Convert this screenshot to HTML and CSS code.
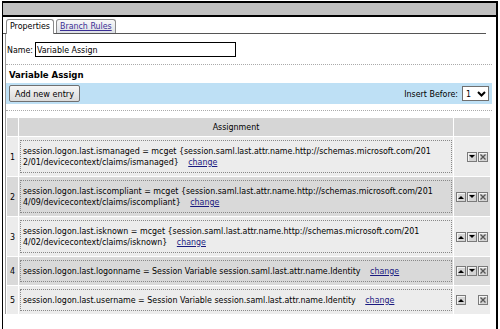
FILE: index.html
```html
<!DOCTYPE html>
<html>
<head>
    <meta charset="UTF-8">
    <title>Variable Assign</title>
    <link rel="stylesheet" href="styles.css">
</head>
<body>
    <div class="window">
        <div class="titlebar"></div>
        <div class="tabs">
            <span class="tab active">Properties</span>
            <span class="tab"><a href="#">Branch Rules</a></span>
        </div>
        <div class="panel">
            <div class="name-row">
                <label>Name:</label>
                <input type="text" value="Variable Assign">
            </div>
            <div class="sep"></div>
            <div class="section-title">Variable Assign</div>
            <div class="toolbar">
                <button type="button">Add new entry</button>
                <div class="insert">
                    <span>Insert Before:</span>
                    <span class="select">1
                        <svg width="9" height="6" viewBox="0 0 9 6"><path d="M1 1 L4.5 4.5 L8 1" fill="none" stroke="#000" stroke-width="2"/></svg>
                    </span>
                </div>
            </div>
            <div class="sep sep-table"></div>
            <table class="entries">
                <tr>
                    <th class="num"></th>
                    <th>Assignment</th>
                    <th class="actions"></th>
                </tr>
                <tr class="light">
                    <td class="num">1</td>
                    <td class="assign"><div class="box">session.logon.last.ismanaged = mcget {session.saml.last.attr.name.http://schemas.microsoft.com/201<br>2/01/devicecontext/claims/ismanaged} <a href="#">change</a></div></td>
                    <td class="actions"><span class="btn hide up"></span><span class="btn down"></span><span class="btn del"></span></td>
                </tr>
                <tr class="dark">
                    <td class="num">2</td>
                    <td class="assign"><div class="box">session.logon.last.iscompliant = mcget {session.saml.last.attr.name.http://schemas.microsoft.com/201<br>4/09/devicecontext/claims/iscompliant} <a href="#">change</a></div></td>
                    <td class="actions"><span class="btn up"></span><span class="btn down"></span><span class="btn del"></span></td>
                </tr>
                <tr class="light">
                    <td class="num">3</td>
                    <td class="assign"><div class="box">session.logon.last.isknown = mcget {session.saml.last.attr.name.http://schemas.microsoft.com/201<br>4/02/devicecontext/claims/isknown} <a href="#">change</a></div></td>
                    <td class="actions"><span class="btn up"></span><span class="btn down"></span><span class="btn del"></span></td>
                </tr>
                <tr class="dark">
                    <td class="num">4</td>
                    <td class="assign"><div class="box">session.logon.last.logonname = Session Variable session.saml.last.attr.name.Identity <a href="#">change</a></div></td>
                    <td class="actions"><span class="btn up"></span><span class="btn down"></span><span class="btn del"></span></td>
                </tr>
                <tr class="light">
                    <td class="num">5</td>
                    <td class="assign"><div class="box">session.logon.last.username = Session Variable session.saml.last.attr.name.Identity <a href="#">change</a></div></td>
                    <td class="actions"><span class="btn up"></span><span class="btn hide down"></span><span class="btn del"></span></td>
                </tr>
            </table>
        </div>
    </div>
</body>
</html>
```
FILE: styles.css
```css
body {
    margin: 0;
    background-color: #FFFFFF;
    color: #000000;
    font-family: "DejaVu Sans Condensed", "Liberation Sans", sans-serif;
    font-size: 8.8px;
}
.window {
    margin: 1px 2px 0 2px;
    height: 328px;
    box-sizing: border-box;
    border-top: 2px solid #000000;
    border-left: 1px solid #000000;
    border-right: 2px solid #000000;
}
.titlebar {
    height: 12px;
    background-color: #C0C0C0;
    border-bottom: 2px solid #000000;
}
.tabs {
    display: flex;
    align-items: flex-end;
    height: 16px;
    padding-left: 3px;
    margin-right: 10px;
    border-bottom: 1px solid #555555;
}
.tab {
    height: 13px;
    line-height: 13px;
    padding: 0 3px;
    margin-right: 2px;
    border: 1px solid #8A8A8A;
    border-bottom: none;
    border-radius: 3px 3px 0 0;
    background: linear-gradient(#F8F8F8, #DDE0E6);
}
.tab a {
    color: #3B2F95;
}
.tab.active {
    height: 14px;
    margin-bottom: -1px;
    background: #FFFFFF;
}
.panel {
    margin: 0 4px 0 2px;
    border-left: 1px solid #9A9A9A;
    height: 280px;
}
.name-row {
    display: flex;
    align-items: center;
    padding: 8px 0 0 1px;
}
.name-row label {
    margin-right: 2px;
}
.name-row input {
    width: 201px;
    height: 15px;
    box-sizing: border-box;
    border: 1px solid #000000;
    padding: 0 1px;
    font-family: inherit;
    font-size: 8.8px;
}
.sep {
    margin-top: 7px;
    border-top: 1px dotted #AAAAAA;
}
.section-title {
    font-weight: bold;
    font-size: 9.5px;
    line-height: 14px;
    padding: 3px 0 0 3px;
}
.toolbar {
    display: flex;
    justify-content: space-between;
    align-items: center;
    height: 21px;
    margin-top: 1px;
    padding: 0 3px;
    background-color: #BEE0F5;
}
.toolbar button {
    height: 17px;
    padding: 0 5px;
    border: 1px solid #707070;
    border-radius: 2px;
    background: linear-gradient(#F6F6F6, #DADADA);
    font-family: inherit;
    font-size: 9px;
}
.insert {
    display: flex;
    align-items: center;
}
.select {
    display: flex;
    align-items: center;
    justify-content: space-between;
    width: 27px;
    height: 15px;
    box-sizing: border-box;
    margin-left: 4px;
    padding: 0 2px 0 3px;
    border: 1px solid #707070;
    background-color: #FFFFFF;
}
.sep-table {
    margin-top: 6px;
}
.entries {
    margin-top: 6px;
    width: 485px;
    border-collapse: separate;
    border-spacing: 1px;
}
.entries th {
    height: 18px;
    padding: 0;
    font-weight: normal;
    background-color: #D6D6D6;
}
.entries td {
    padding: 0;
}
.entries .num {
    width: 11px;
    text-align: center;
}
.entries .actions {
    width: 34px;
    padding-left: 2px;
}
.light td {
    background-color: #ECECEC;
}
.dark td {
    background-color: #D9D9D9;
}
.assign {
    padding: 3px 1px 3px 1px !important;
}
.box {
    padding: 5px 2px 4px 2px;
    line-height: 11px;
    border: 1px dotted #888888;
}
.box a {
    margin-left: 7px;
    color: #1A1A80;
}
.actions {
    font-size: 0;
    white-space: nowrap;
}
.btn {
    display: inline-block;
    width: 10px;
    height: 10px;
    box-sizing: border-box;
    margin-right: 1px;
    border: 1px solid #7A7A7A;
    background-color: #D4D4D4;
    background-repeat: no-repeat;
    background-position: center;
    box-shadow: inset 1px 1px #F4F4F4;
    vertical-align: middle;
}
.btn.hide {
    visibility: hidden;
}
.btn.up {
    background-image: url("data:image/svg+xml;utf8,<svg xmlns='http://www.w3.org/2000/svg' width='6' height='4'><path d='M0 4 L3 1 L6 4 Z' fill='black'/></svg>");
}
.btn.down {
    background-image: url("data:image/svg+xml;utf8,<svg xmlns='http://www.w3.org/2000/svg' width='6' height='4'><path d='M0 0 L6 0 L3 3 Z' fill='black'/></svg>");
}
.btn.del {
    background-image: url("data:image/svg+xml;utf8,<svg xmlns='http://www.w3.org/2000/svg' width='6' height='6'><path d='M0.5 0.5 L5.5 5.5 M5.5 0.5 L0.5 5.5' stroke='%23555' stroke-width='1.3'/></svg>");
}
```
